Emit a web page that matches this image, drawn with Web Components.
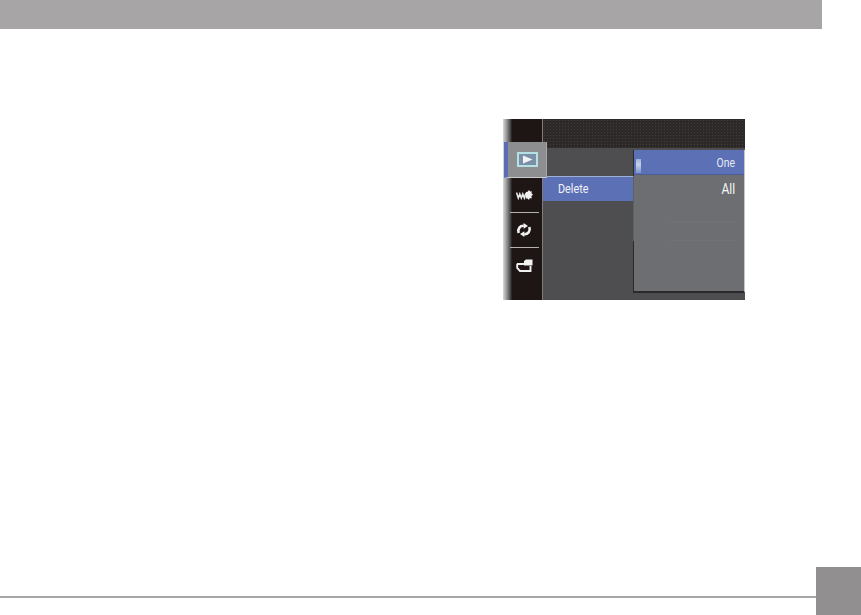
<!DOCTYPE html>
<html>
<head>
<meta charset="utf-8">
<style>
  html, body { margin: 0; padding: 0; background: #fff; }
  body { width: 861px; height: 615px; overflow: hidden; display: flex; flex-direction: column; font-family: Roboto, sans-serif; }
</style>
</head>
<body>
<top-bar></top-bar>
<camera-screen>
  <rail-tab slot="rail" selected>
    <svg viewBox="0 0 21 15" width="21" height="15">
      <rect x="1" y="1" width="19" height="13" fill="#7b90a6" stroke="#b4e2e4" stroke-width="2"/>
      <path d="M6 3.5 L15.5 7.5 L6 11.5 Z" fill="#f1f3f4"/>
    </svg>
  </rail-tab>
  <rail-tab slot="rail" line>
    <svg viewBox="0 0 17 10" width="17" height="10">
      <path d="M0.5 2.5 L2.3 8 L3.8 4 L5.3 8 L6.8 4 L8.3 8 L10 3" fill="none" stroke="#e8e8e8" stroke-width="1.6"/>
      <path d="M13 0 L14 1.6 L15.8 1.2 L15.5 3.2 L17 4.8 L15.4 6 L15.8 8.4 L13.8 8 L13 10 L11.6 8.4 L9.6 8.4 L10 2 L11.6 1.8 Z" fill="#f2f2f2"/>
    </svg>
  </rail-tab>
  <rail-tab slot="rail" line>
    <svg viewBox="0 0 16 14" width="16" height="14">
      <path d="M2.6 10 C1.4 5.6 4.2 2.6 7.8 2.8" fill="none" stroke="#f2f2f2" stroke-width="2.6"/>
      <path d="M7.6 0 L12 3 L7.6 5.8 Z" fill="#f2f2f2"/>
      <path d="M13.4 4 C14.6 8.4 11.8 11.4 8.2 11.2" fill="none" stroke="#f2f2f2" stroke-width="2.6"/>
      <path d="M8.4 14 L4 11 L8.4 8.2 Z" fill="#f2f2f2"/>
    </svg>
  </rail-tab>
  <rail-tab slot="rail">
    <svg viewBox="0 0 17 13" width="17" height="13">
      <path d="M0.8 5 H8 M1.2 5 V9 L4 12 H14.5 V7" fill="none" stroke="#f0f0f0" stroke-width="1.9"/>
      <path d="M8 2 L10 0.5 H16.5 V6.5 H8 Z" fill="#f2f2f2"/>
    </svg>
  </rail-tab>
  <menu-row slot="list">Delete</menu-row>
  <option-row slot="options" active>One</option-row>
  <option-row slot="options">All</option-row>
</camera-screen>
<bottom-bar></bottom-bar>

<script>
// header strip, stops short of the right edge
class TopBar extends HTMLElement {
  constructor() {
    super();
    this.attachShadow({ mode: 'open' });
    this.shadowRoot.innerHTML = `
      <style>
        :host { display: block; flex: none; width: 822px; height: 29px; background: #a7a5a6; }
      </style>
    `;
  }
}

class RailTab extends HTMLElement {
  constructor() {
    super();
    this.attachShadow({ mode: 'open' });
    this.shadowRoot.innerHTML = `
      <style>
        :host { display: flex; align-items: center; justify-content: center; height: 35px; box-sizing: border-box; position: relative; margin-right: 6px; }
        :host([line]) { border-bottom: 1px solid #b5b1ae; margin: 0 3px 0 -2px; padding: 0 3px 0 2px; }
        :host([selected]) {
          height: 36px;
          margin: 0 -5px 0 -8px;
          padding: 0;
          box-sizing: border-box;
          background: #8d8e8f;
          border-left: 4px solid #5a6db4;
          border-bottom: 1px solid #c9cbcd;
          border-right: 1px solid #a5a6a8;
          z-index: 2;
        }
        svg { display: block; }
      </style>
      <slot></slot>
    `;
  }
}

class MenuRow extends HTMLElement {
  constructor() {
    super();
    this.attachShadow({ mode: 'open' });
    this.shadowRoot.innerHTML = `
      <style>
        :host {
          display: flex; align-items: center; box-sizing: border-box;
          height: 25px; padding-left: 15px;
          background: #5c70b6; border-top: 1px solid #9fb0d8;
          color: #f2f3f7; font: 12px Roboto, sans-serif;
        }
        span { display: inline-block; transform: scaleX(.9); transform-origin: left; }
      </style>
      <span><slot></slot></span>
    `;
  }
}

class OptionRow extends HTMLElement {
  constructor() {
    super();
    this.attachShadow({ mode: 'open' });
    this.shadowRoot.innerHTML = `
      <style>
        :host {
          display: flex; align-items: center; justify-content: flex-end; position: relative;
          height: 28px; padding-right: 9px; box-sizing: border-box;
          color: #f6f6f8; font: 15px Roboto, sans-serif;
        }
        :host([active]) { background: #5c70b6; height: 25px; border-bottom: 1px solid #4c5d9a; color: #e6e9f4; font-size: 13px; }
        span { display: inline-block; transform: scaleX(.8); transform-origin: right; }
        i { display: none; position: absolute; left: 2px; bottom: 1px; width: 5px; height: 14px; background: linear-gradient(#9db0dc, #c5d0ea 40%, #7f94cc); }
        :host([active]) i { display: block; }
      </style>
      <i></i><span><slot></slot></span>
    `;
  }
}

class CameraScreen extends HTMLElement {
  constructor() {
    super();
    this.attachShadow({ mode: 'open' });
    this.shadowRoot.innerHTML = `
      <style>
        :host {
          display: grid; grid-template-columns: 40px 202px; flex: none;
          width: 242px; height: 181px; margin: 90px 0 0 503px;
          background: #4e4d4f; position: relative;
        }
        .rail {
          background: linear-gradient(90deg, #d9d9d9 0, #8f8f8f 4px, #3b3a3a 8px, #1d1614 9px);
          border-right: 1px solid #7f7d7c;
          padding: 23px 0 0 9px;
          display: flex; flex-direction: column;
        }
        .main { display: flex; flex-direction: column; position: relative; }
        .band {
          height: 29px; flex: none;
          background-color: #2c2928;
          background-image: radial-gradient(#413d3b 0.8px, transparent 1px);
          background-size: 3px 3px;
        }
        .list { margin-top: 28px; width: 91px; }
        .panel {
          position: absolute; left: 90px; right: 0; top: 31px; height: 143px;
          box-sizing: border-box;
          padding-left: 1px;
          background: linear-gradient(#2a2a2c 0 26px, #5e5f62 26px 91px, #2a2a2c 91px) left top / 1px 100% no-repeat, #6d6e71;
          border-bottom: 2px solid #2a2a2c;
          border-right: 1px solid #c6c6c8;
          display: flex; flex-direction: column;
        }
        .ghost { position: absolute; left: 36px; right: 8px; height: 1px; background: #717275; }
      </style>
      <div class="rail"><slot name="rail"></slot></div>
      <div class="main">
        <div class="band"></div>
        <div class="list"><slot name="list"></slot></div>
        <div class="panel">
          <slot name="options"></slot>
          <div class="ghost" style="top:71px"></div>
          <div class="ghost" style="top:90px"></div>
        </div>
      </div>
    `;
  }
}

// rule along the bottom with the page tab at its end
class BottomBar extends HTMLElement {
  constructor() {
    super();
    this.attachShadow({ mode: 'open' });
    this.shadowRoot.innerHTML = `
      <style>
        :host { display: flex; align-items: center; flex: none; height: 48px; margin-top: auto; }
        .rule { flex: 1; height: 2px; background: #a7a5a6; margin-top: 11px; }
        .tab { width: 45px; height: 48px; background: #918f8f; }
      </style>
      <div class="rule"></div>
      <div class="tab"></div>
    `;
  }
}

customElements.define('top-bar', TopBar);
customElements.define('rail-tab', RailTab);
customElements.define('menu-row', MenuRow);
customElements.define('option-row', OptionRow);
customElements.define('camera-screen', CameraScreen);
customElements.define('bottom-bar', BottomBar);
</script>
</body>
</html>
